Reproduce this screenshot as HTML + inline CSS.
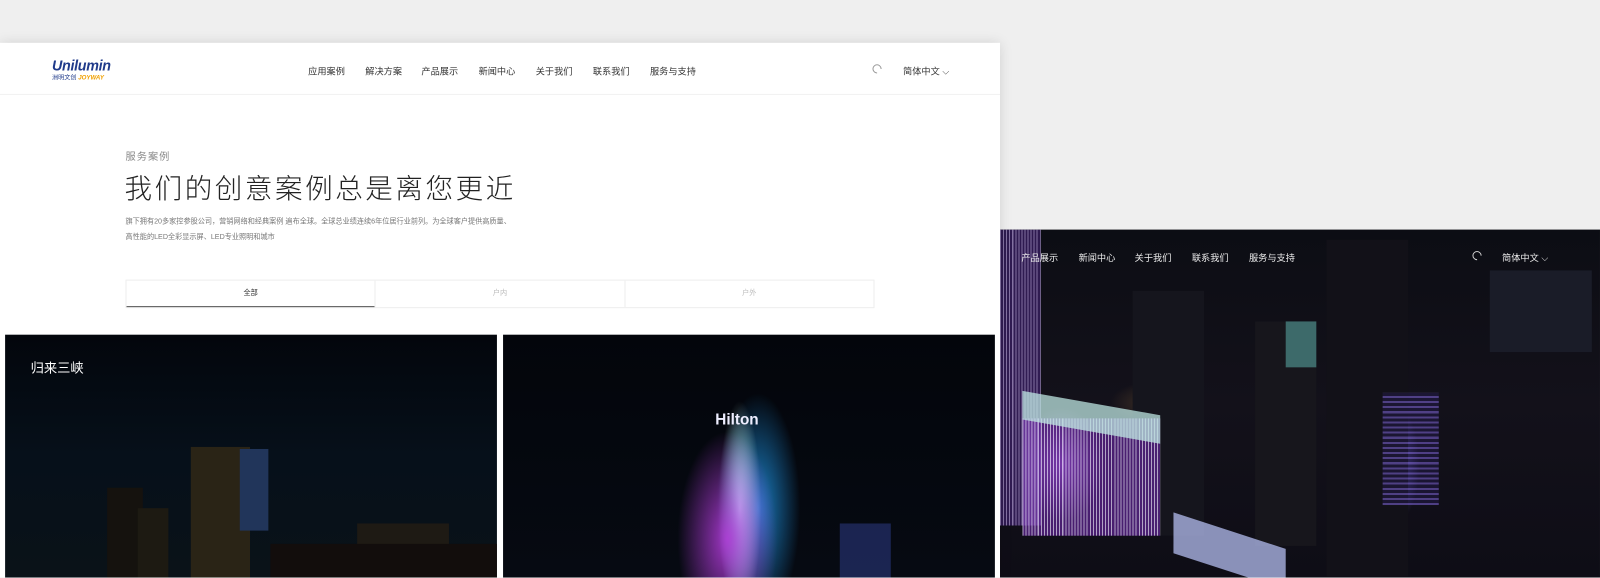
<!DOCTYPE html>
<html style="width:1600px;height:578px;overflow:hidden"><head><meta charset="utf-8"><style>
*{margin:0;padding:0;box-sizing:border-box}
body{width:1600px;height:578px;background:#efefef;position:relative;overflow:hidden;font-family:"Liberation Sans","Noto Sans CJK SC",sans-serif}
#clip{position:absolute;left:0;top:0;width:1600px;height:578px;overflow:hidden}
#wrap{position:absolute;left:0;top:0;width:1568px;height:566px;transform:scale(1.0204);transform-origin:0 0;overflow:hidden}
.abs{position:absolute}
#right{left:980px;top:225px;width:588px;height:341px;overflow:hidden;background:
radial-gradient(ellipse 60px 80px at 60px 230px,rgba(200,120,255,.6),transparent 70%),
radial-gradient(ellipse 60px 30px at 150px 170px,rgba(150,110,60,.35),transparent 70%),
radial-gradient(ellipse 30px 80px at 390px 230px,rgba(120,110,240,.5),transparent 70%),
linear-gradient(180deg,#0c0d14 0%,#13111a 50%,#0e0d16 100%)}
#left{left:0;top:42px;width:980px;height:524px;overflow:hidden;background:#fff;box-shadow:0 0 12px rgba(0,0,0,.12)}
.nav a{position:absolute;font-size:9px;color:#333;text-decoration:none;white-space:nowrap}
.rn a{position:absolute;font-size:9px;color:#eee;white-space:nowrap}
.bld{position:absolute}
.srch{position:absolute;width:9px;height:9px;border:1px solid;border-radius:50%;border-bottom-color:transparent;transform:rotate(-45deg)}
</style></head><body>
<div id="clip"><div id="wrap">
<div class="abs" id="right">
  <div class="bld" style="left:130px;top:60px;width:70px;height:240px;background:#15151d"></div>
  <div class="bld" style="left:250px;top:90px;width:60px;height:220px;background:#17161c"></div>
  <div class="bld" style="left:320px;top:10px;width:80px;height:330px;background:#121118"></div>
  <div class="bld" style="left:480px;top:40px;width:100px;height:80px;background:#1a1c28"></div>
  <div class="bld" style="left:280px;top:90px;width:30px;height:45px;background:#3d6a6a"></div>
  <div class="abs" style="left:0;top:0;width:40px;height:290px;background:repeating-linear-gradient(90deg,rgba(210,180,255,.6) 0 1px,rgba(80,40,140,.5) 1px 3px)"></div>
  <div class="abs" style="left:22px;top:185px;width:135px;height:115px;background:repeating-linear-gradient(90deg,rgba(230,210,255,.75) 0 1px,rgba(110,40,170,.6) 1px 3px)"></div>
  <div class="abs" style="left:22px;top:170px;width:135px;height:28px;background:rgba(190,230,225,.75);transform:skewY(10deg)"></div>
  <div class="abs" style="left:170px;top:295px;width:110px;height:40px;background:rgba(180,190,240,.75);transform:skewY(18deg)"></div>
  <div class="abs" style="left:375px;top:160px;width:55px;height:110px;background:repeating-linear-gradient(0deg,rgba(140,110,240,.5) 0 2px,rgba(40,30,90,.4) 2px 5px)"></div>
  <div class="rn">
    <a style="left:21px;top:21px">产品展示</a><a style="left:77px;top:21px">新闻中心</a><a style="left:132px;top:21px">关于我们</a><a style="left:188px;top:21px">联系我们</a><a style="left:244px;top:21px">服务与支持</a>
    <span class="srch" style="left:463px;top:21px;color:#ccc"></span>
    <a style="left:492px;top:21px">简体中文 ⌵</a>
  </div>
</div>
<div class="abs" id="left">
  <div class="abs" style="left:51px;top:14px;font:italic bold 14px 'Liberation Sans',sans-serif;color:#1f3a8a;letter-spacing:-.3px">Unilumin</div>
  <div class="abs" style="left:51px;top:29px;font-size:6px;color:#1f3a8a;white-space:nowrap">洲明文创 <span style="color:#f0a000;font-weight:bold;font-style:italic">JOYWAY</span></div>
  <div class="nav">
    <a style="left:302px;top:21px">应用案例</a><a style="left:358px;top:21px">解决方案</a><a style="left:413px;top:21px">产品展示</a><a style="left:469px;top:21px">新闻中心</a><a style="left:525px;top:21px">关于我们</a><a style="left:581px;top:21px">联系我们</a><a style="left:637px;top:21px">服务与支持</a>
    <span class="srch" style="left:855px;top:21px;color:#999"></span>
    <a style="left:885px;top:21px">简体中文 ⌵</a>
  </div>
  <div class="abs" style="left:0;top:50px;width:980px;height:1px;background:#f0f0f0"></div>
  <div class="abs" style="left:123px;top:103px;font-size:10px;color:#888;letter-spacing:1px">服务案例</div>
  <div class="abs" style="left:122px;top:121px;font-size:27px;color:#222;letter-spacing:2.5px;font-weight:300;white-space:nowrap">我们的创意案例总是离您更近</div>
  <div class="abs" style="left:123px;top:168px;font-size:7px;color:#777;line-height:15px;white-space:nowrap">旗下拥有20多家控参股公司，营销网络和经典案例 遍布全球。全球总业绩连续6年位居行业前列。为全球客户提供高质量、<br>高性能的LED全彩显示屏、LED专业照明和城市</div>
  <div class="abs" style="left:123px;top:232px;width:734px;height:28px;border:1px solid #eee;display:flex;font-size:7px;color:#bbb">
    <div style="flex:1;text-align:center;line-height:26px;color:#333;border-bottom:1px solid #555">全部</div>
    <div style="flex:1;text-align:center;line-height:26px;border-left:1px solid #eee">户内</div>
    <div style="flex:1;text-align:center;line-height:26px;border-left:1px solid #eee">户外</div>
  </div>
  <div class="abs" style="left:5px;top:286px;width:482px;height:238px;overflow:hidden;background:linear-gradient(180deg,#03060c 0%,#06101a 50%,#0a1218 100%)">
    <div class="abs" style="left:25px;top:22px;font-size:13px;color:#fff">归来三峡</div>
    <div class="bld" style="left:182px;top:110px;width:58px;height:128px;background:#2a2416"></div>
    <div class="bld" style="left:230px;top:112px;width:28px;height:80px;background:#21355a"></div>
    <div class="bld" style="left:100px;top:150px;width:35px;height:88px;background:#15120e"></div>
    <div class="bld" style="left:130px;top:170px;width:30px;height:68px;background:#1d1a12"></div>
    <div class="bld" style="left:345px;top:185px;width:90px;height:53px;background:#1e1a14"></div>
    <div class="bld" style="left:260px;top:205px;width:222px;height:33px;background:#120d0c"></div>
  </div>
  <div class="abs" style="left:493px;top:286px;width:482px;height:238px;overflow:hidden;background:
    radial-gradient(ellipse 70px 150px at 220px 200px,rgba(180,60,220,.9),transparent 70%),
    radial-gradient(ellipse 30px 150px at 232px 170px,rgba(200,255,255,.95),transparent 70%),
    radial-gradient(ellipse 55px 150px at 250px 170px,rgba(30,150,230,.85),transparent 75%),
    linear-gradient(180deg,#03050b,#060a12)">
    <div class="abs" style="left:208px;top:75px;font:bold 15px 'Liberation Sans',sans-serif;color:#eef">Hilton</div>
    <div class="abs" style="left:330px;top:185px;width:50px;height:53px;background:rgba(70,90,200,.35)"></div>
  </div>
</div>
</div></div>
</body></html>
